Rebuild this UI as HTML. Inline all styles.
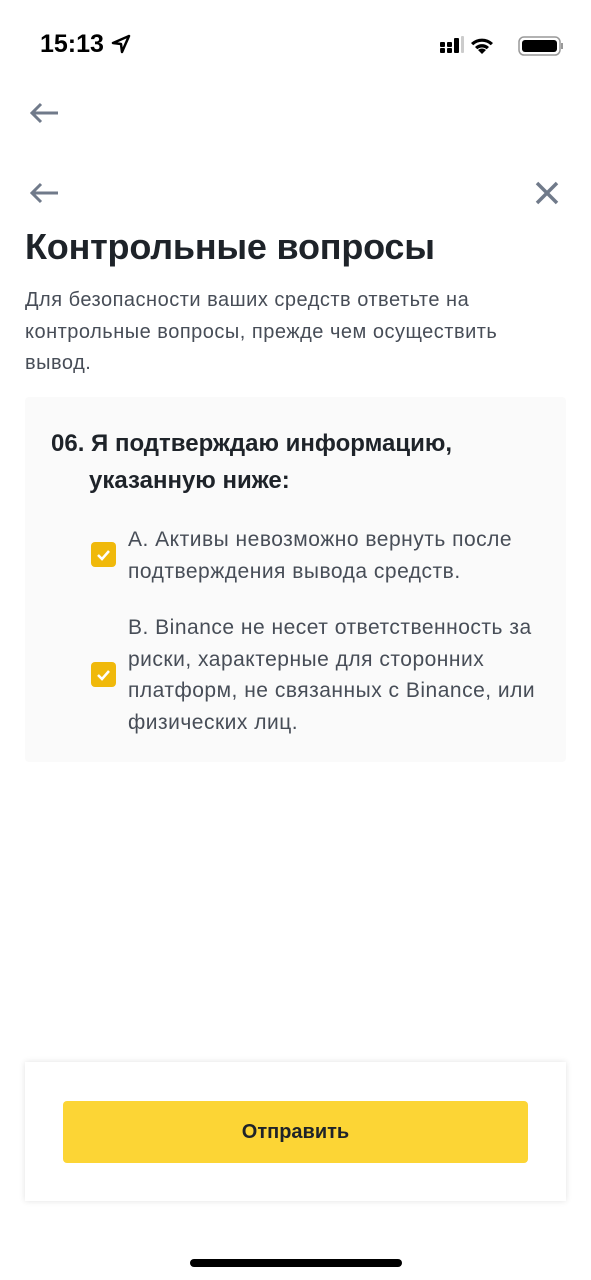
<!DOCTYPE html>
<html><head><meta charset="utf-8"><style>
*{margin:0;padding:0;box-sizing:border-box}
body{width:591px;height:1280px;background:#fff;font-family:"Liberation Sans",sans-serif;position:relative;overflow:hidden;color:#1e2329}
.abs{position:absolute}
.time{left:40px;top:30px;font-size:25px;font-weight:bold;color:#000}
h1{position:absolute;left:25px;top:226px;font-size:36px;font-weight:bold;letter-spacing:-0.2px;white-space:nowrap}
.desc{left:25px;top:285px;font-size:20px;letter-spacing:0.5px;line-height:31.5px;color:#474d57;white-space:nowrap}
.card{left:25px;top:397px;width:541px;height:365px;background:#fafafa;border-radius:4px}
.q{left:51px;top:425px;font-size:24px;font-weight:bold;line-height:37px;white-space:nowrap}
.opt{left:128px;font-size:21px;letter-spacing:0.5px;line-height:31.5px;color:#474d57;white-space:nowrap}
.cb{left:91px;width:25px;height:25px;background:#f0b90b;border-radius:4px}
.foot{left:25px;top:1062px;width:541px;height:139px;background:#fff;box-shadow:0 0 6px rgba(0,0,0,.12)}
.btn{left:63px;top:1101px;width:465px;height:62px;background:#fcd535;border-radius:4px;text-align:center;line-height:62px;font-size:20px;font-weight:bold}
.home{left:190px;top:1259px;width:212px;height:8px;background:#000;border-radius:4px}
</style></head><body>
<div class="abs time">15:13 <svg width="20" height="20" viewBox="0 0 20 20" style="vertical-align:-2px"><path d="M18 2 L2 9 L10 10 L11 18 Z" fill="none" stroke="#000" stroke-width="2.5" stroke-linejoin="round"/></svg></div>
<svg class="abs" style="left:440px;top:36px" width="125" height="22" viewBox="0 0 125 22">
<g fill="#000"><rect x="0" y="6" width="5" height="5" rx="1"/><rect x="0" y="12" width="5" height="5" rx="1"/><rect x="7" y="6" width="5" height="5" rx="1"/><rect x="7" y="12" width="5" height="5" rx="1"/><rect x="14" y="2" width="5" height="15" rx="1"/><rect x="21" y="0" width="3" height="17" rx="1" fill="#ccc"/>
<path d="M42 18 l-4-4 a6 6 0 0 1 8 0z M35 11 a10 10 0 0 1 14 0 l-2.3 2.3 a7 7 0 0 0 -9.4 0z M31 7 a16 16 0 0 1 22 0 l-2.2 2.2 a13 13 0 0 0 -17.6 0z"/>
<rect x="79" y="1" width="41" height="18" rx="5" fill="none" stroke="#999" stroke-width="1.5"/><rect x="82" y="4" width="35" height="12" rx="3"/><rect x="121" y="7" width="2" height="6" fill="#999"/></g></svg>
<svg class="abs" style="left:28px;top:101px" width="32" height="24"><path d="M30 12H4 M13 3 L4 12 L13 21" fill="none" stroke="#707a8a" stroke-width="3"/></svg>
<svg class="abs" style="left:28px;top:181px" width="32" height="24"><path d="M30 12H4 M13 3 L4 12 L13 21" fill="none" stroke="#707a8a" stroke-width="3"/></svg>
<svg class="abs" style="left:534px;top:180px" width="26" height="26"><path d="M3 3L23 23M23 3L3 23" stroke="#707a8a" stroke-width="3.5"/></svg>
<h1>Контрольные вопросы</h1>
<div class="abs desc">Для безопасности ваших средств ответьте на<br>контрольные вопросы, прежде чем осуществить<br>вывод.</div>
<div class="abs card"></div>
<div class="abs q">06. Я подтверждаю информацию,<br><span style="padding-left:38px">указанную ниже:</span></div>
<div class="abs cb" style="top:542px"><svg width="25" height="25"><path d="M7 13l4 4 7-8" fill="none" stroke="#fff" stroke-width="2.5"/></svg></div>
<div class="abs opt" style="top:524px">A. Активы невозможно вернуть после<br>подтверждения вывода средств.</div>
<div class="abs cb" style="top:662px"><svg width="25" height="25"><path d="M7 13l4 4 7-8" fill="none" stroke="#fff" stroke-width="2.5"/></svg></div>
<div class="abs opt" style="top:612px">B. Binance не несет ответственность за<br>риски, характерные для сторонних<br>платформ, не связанных с Binance, или<br>физических лиц.</div>
<div class="abs foot"></div>
<div class="abs btn">Отправить</div>
<div class="abs home"></div>
</body></html>
